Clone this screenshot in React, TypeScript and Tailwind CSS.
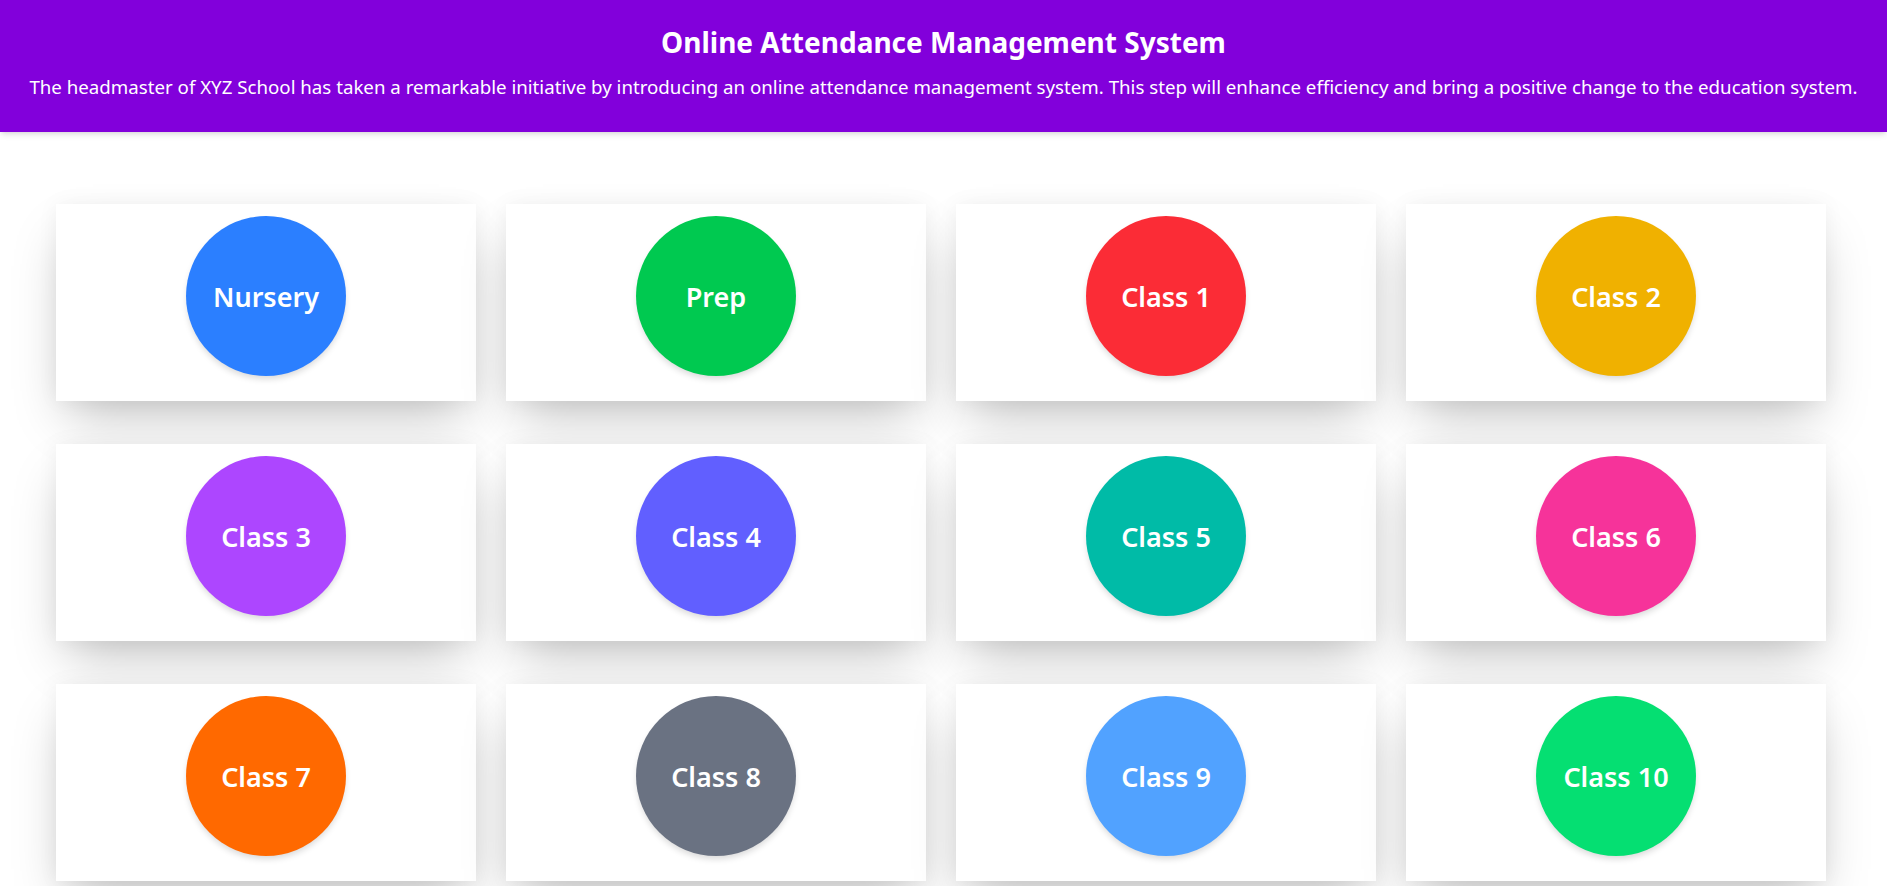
import React from "react";

const classes = [
  { name: "Nursery", color: "bg-[#2b7fff]" },
  { name: "Prep", color: "bg-[#00c950]" },
  { name: "Class 1", color: "bg-[#fb2c36]" },
  { name: "Class 2", color: "bg-[#f0b100]" },
  { name: "Class 3", color: "bg-[#ad46ff]" },
  { name: "Class 4", color: "bg-[#615fff]" },
  { name: "Class 5", color: "bg-[#00bba7]" },
  { name: "Class 6", color: "bg-[#f6339a]" },
  { name: "Class 7", color: "bg-[#ff6900]" },
  { name: "Class 8", color: "bg-[#6a7282]" },
  { name: "Class 9", color: "bg-[#51a2ff]" },
  { name: "Class 10", color: "bg-[#05df72]" },
];

export default function App() {
  return (
    <div className="min-h-screen bg-white font-['Noto_Sans',sans-serif]">
      <header className="flex h-[132px] flex-col items-center bg-[#8200db] pt-[24px] text-white shadow-md">
        <h1 className="text-[28px] font-bold leading-[36px]">Online Attendance Management System</h1>
        <p className="mt-[13px] text-[18.7px] leading-[28px]">
          The headmaster of XYZ School has taken a remarkable initiative by introducing an online attendance management system. This step will enhance efficiency and bring a positive change to the education system.
        </p>
      </header>
      <main className="grid grid-cols-4 gap-x-[30px] gap-y-[43px] pl-[56px] pr-[61px] pt-[72px] pb-[40px]">
        {classes.map((c) => (
          <div
            key={c.name}
            className="flex justify-center bg-white pt-[12px] pb-[25px] shadow-[0_25px_50px_-12px_rgba(0,0,0,0.25),0_0_20px_rgba(0,0,0,0.05)]"
          >
            <div
              className={`flex h-[160px] w-[160px] items-center justify-center rounded-full ${c.color} pt-[3px] text-[27px] font-semibold text-white shadow-[0_4px_6px_-1px_rgba(0,0,0,0.15)]`}
            >
              {c.name}
            </div>
          </div>
        ))}
      </main>
    </div>
  );
}
